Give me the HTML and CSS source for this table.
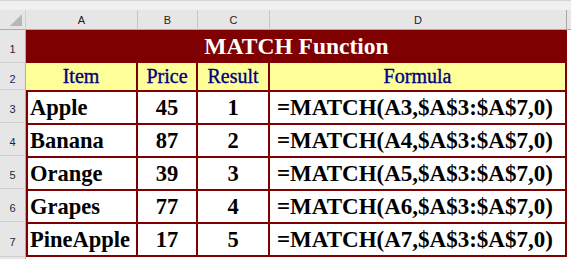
FILE: index.html
```html
<!DOCTYPE html>
<html>
<head>
<meta charset="utf-8">
<link rel="stylesheet" href="styles.css">
</head>
<body>
<div class="strip"></div>
<div class="sheet">
  <div class="corner"><svg class="tri" width="12" height="12" viewBox="0 0 12 12"><polygon points="12,0 12,12 0,12" fill="#b7b7b7"/></svg></div>
  <div class="colh">A</div>
  <div class="colh">B</div>
  <div class="colh">C</div>
  <div class="colh">D</div>
  <div class="colh rest"></div>

  <div class="rowh">1</div>
  <div class="title">MATCH Function</div>
  <div class="blank"></div>

  <div class="rowh">2</div>
  <div class="hd">Item</div>
  <div class="hd">Price</div>
  <div class="hd">Result</div>
  <div class="hd last">Formula</div>
  <div class="blank"></div>

  <div class="rowh">3</div>
  <div class="c a">Apple</div>
  <div class="c m">45</div>
  <div class="c m">1</div>
  <div class="c f">=MATCH(A3,$A$3:$A$7,0)</div>
  <div class="blank"></div>

  <div class="rowh">4</div>
  <div class="c a">Banana</div>
  <div class="c m">87</div>
  <div class="c m">2</div>
  <div class="c f">=MATCH(A4,$A$3:$A$7,0)</div>
  <div class="blank"></div>

  <div class="rowh">5</div>
  <div class="c a">Orange</div>
  <div class="c m">39</div>
  <div class="c m">3</div>
  <div class="c f">=MATCH(A5,$A$3:$A$7,0)</div>
  <div class="blank"></div>

  <div class="rowh">6</div>
  <div class="c a">Grapes</div>
  <div class="c m">77</div>
  <div class="c m">4</div>
  <div class="c f">=MATCH(A6,$A$3:$A$7,0)</div>
  <div class="blank"></div>

  <div class="rowh">7</div>
  <div class="c a lastrow">PineApple</div>
  <div class="c m lastrow">17</div>
  <div class="c m lastrow">5</div>
  <div class="c f lastrow">=MATCH(A7,$A$3:$A$7,0)</div>
  <div class="blank"></div>

  <div class="rowh end"></div>
  <div class="blank wide"></div>
</div>
</body>
</html>
```
FILE: styles.css
```css
html, body {
  margin: 0;
  padding: 0;
  background: #ffffff;
}
body {
  width: 571px;
  height: 259px;
  overflow: hidden;
}
.strip {
  height: 9px;
  background: #f0f0f0;
  border-top: 1px solid #d6d6d6;
}
.sheet {
  display: grid;
  grid-template-columns: 26px 112px 60px 72px 297px 1fr;
  grid-template-rows: 20px 33px 27px 33px 33px 33px 33px 35px 1fr;
  height: 249px;
}
.corner {
  background: #e6e6e6;
  border-right: 1px solid #d0d0d0;
  border-bottom: 1px solid #ababab;
  box-sizing: border-box;
  display: flex;
  align-items: flex-end;
  justify-content: flex-end;
  padding: 0 3px 3px 0;
}
.colh {
  background: #e6e6e6;
  border-right: 1px solid #c6c6c6;
  border-bottom: 1px solid #ababab;
  box-sizing: border-box;
  font-family: "Liberation Sans", Arial, sans-serif;
  font-size: 11px;
  color: #222222;
  display: flex;
  align-items: center;
  justify-content: center;
  padding-top: 1px;
}
.colh.rest {
  border-right: none;
  border-left: 1px solid #a8a8a8;
  margin-left: -1px;
}
.rowh {
  background: #e6e6e6;
  border-right: 1px solid #ababab;
  border-bottom: 1px solid #d0d0d0;
  box-sizing: border-box;
  font-family: "Liberation Sans", Arial, sans-serif;
  font-size: 11px;
  color: #1f1f3f;
  display: flex;
  align-items: center;
  justify-content: center;
  padding-top: 6px;
}
.rowh.end {
  border-bottom: none;
}
.title {
  grid-column: 2 / 6;
  background: #7f0000;
  color: #ffffff;
  font-family: "Liberation Serif", "Times New Roman", serif;
  font-weight: bold;
  font-size: 23.5px;
  line-height: 33px;
  text-align: center;
}
.blank {
  background: #ffffff;
}
.blank.wide {
  grid-column: 2 / 7;
}
.hd {
  background: #ffff99;
  color: #000080;
  font-family: "Liberation Serif", "Times New Roman", serif;
  font-size: 20px;
  line-height: 27px;
  text-align: center;
  border-right: 2px solid #7f0000;
  box-sizing: border-box;
  -webkit-text-stroke: 0.35px #000080;
}
.c {
  background: #ffffff;
  color: #000000;
  font-family: "Liberation Serif", "Times New Roman", serif;
  font-weight: bold;
  font-size: 22.5px;
  line-height: 31px;
  border-top: 2px solid #7f0000;
  border-right: 2px solid #7f0000;
  box-sizing: border-box;
  white-space: nowrap;
  overflow: hidden;
}
.c.lastrow {
  border-bottom: 2px solid #7f0000;
}
.c.a {
  border-left: 2px solid #7f0000;
  padding-left: 2px;
}
.c.m {
  text-align: center;
}
.c.f {
  padding-left: 7px;
  font-size: 23px;
}
```
